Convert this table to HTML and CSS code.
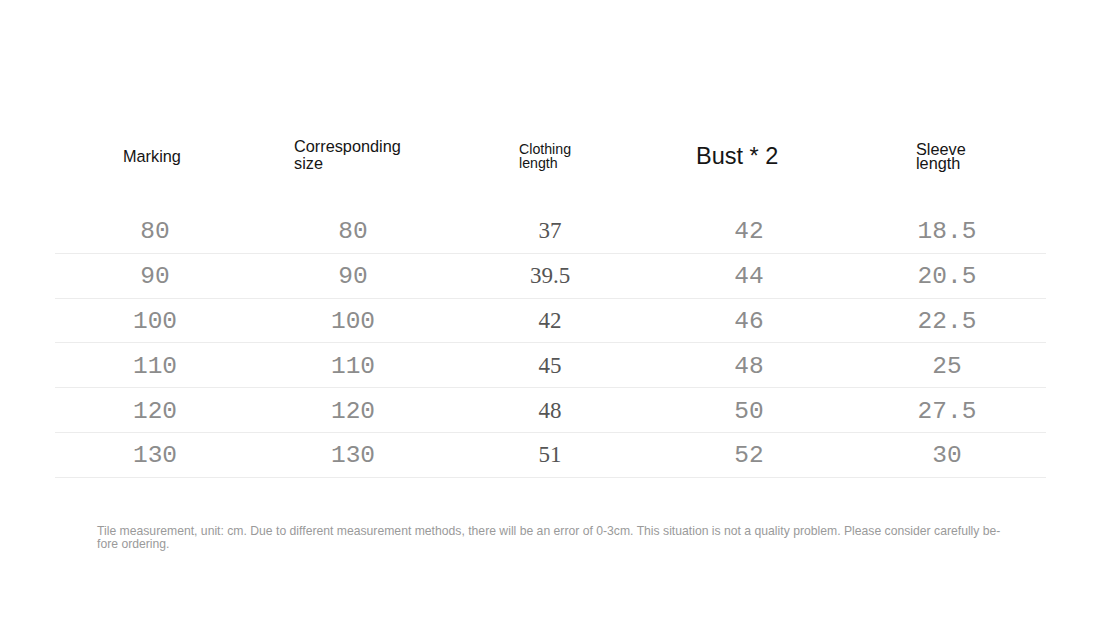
FILE: index.html
```html
<!DOCTYPE html>
<html>
<head>
<meta charset="utf-8">
<link rel="stylesheet" href="styles.css">
</head>
<body>
<div class="page">
  <div class="head">
    <div class="hc h1">Marking</div>
    <div class="hc h2">Corresponding<br>size</div>
    <div class="hc h3">Clothing<br>length</div>
    <div class="hc h4">Bust * 2</div>
    <div class="hc h5">Sleeve<br>length</div>
  </div>
  <div class="rows">
    <div class="row"><span class="m">80</span><span class="m">80</span><span class="s">37</span><span class="m">42</span><span class="m">18.5</span></div>
    <div class="row"><span class="m">90</span><span class="m">90</span><span class="s">39.5</span><span class="m">44</span><span class="m">20.5</span></div>
    <div class="row"><span class="m">100</span><span class="m">100</span><span class="s">42</span><span class="m">46</span><span class="m">22.5</span></div>
    <div class="row"><span class="m">110</span><span class="m">110</span><span class="s">45</span><span class="m">48</span><span class="m">25</span></div>
    <div class="row"><span class="m">120</span><span class="m">120</span><span class="s">48</span><span class="m">50</span><span class="m">27.5</span></div>
    <div class="row"><span class="m">130</span><span class="m">130</span><span class="s">51</span><span class="m">52</span><span class="m">30</span></div>
  </div>
  <p class="note">Tile measurement, unit: cm. Due to different measurement methods, there will be an error of 0-3cm. This situation is not a quality problem. Please consider carefully be-<br>fore ordering.</p>
</div>
</body>
</html>
```

FILE: styles.css
```css
html, body {
  margin: 0;
  padding: 0;
  background: #fff;
}
.page {
  width: 1100px;
  height: 630px;
  padding-top: 135px;
  box-sizing: border-box;
  font-family: "Liberation Sans", Arial, sans-serif;
}
.head {
  margin-left: 55px;
  width: 990px;
  height: 42px;
  display: grid;
  grid-template-columns: repeat(5, 198px);
  align-items: center;
  color: #151515;
}
.hc {
  white-space: nowrap;
}
.h1 { padding-left: 68px; font-size: 16.3px; line-height: 18px; }
.h2 { padding-left: 41px; font-size: 16.3px; line-height: 17px; margin-top: -2px; }
.h3 { padding-left: 68px; font-size: 14.2px; line-height: 14px; margin-top: -1px; }
.h4 { padding-left: 47px; font-size: 23.5px; line-height: 26px; }
.h5 { padding-left: 69px; font-size: 16.3px; line-height: 14px; }
.rows {
  margin-top: 32px;
  margin-left: 55px;
  width: 991px;
}
.row {
  display: grid;
  grid-template-columns: repeat(5, 198px);
  height: 43.8px;
  align-items: center;
  justify-items: center;
  border-bottom: 1px solid #ececec;
}
.m {
  font-family: "Liberation Mono", "Courier New", monospace;
  font-size: 24.5px;
  color: #8c8c8c;
  padding-left: 2px;
  padding-top: 2px;
}
.s {
  font-family: "Liberation Serif", "Times New Roman", serif;
  font-size: 23px;
  color: #555;
  padding-top: 1px;
}
.note {
  margin: 47px 0 0 97px;
  font-size: 12.2px;
  line-height: 13px;
  color: #9a9a9a;
}
```
